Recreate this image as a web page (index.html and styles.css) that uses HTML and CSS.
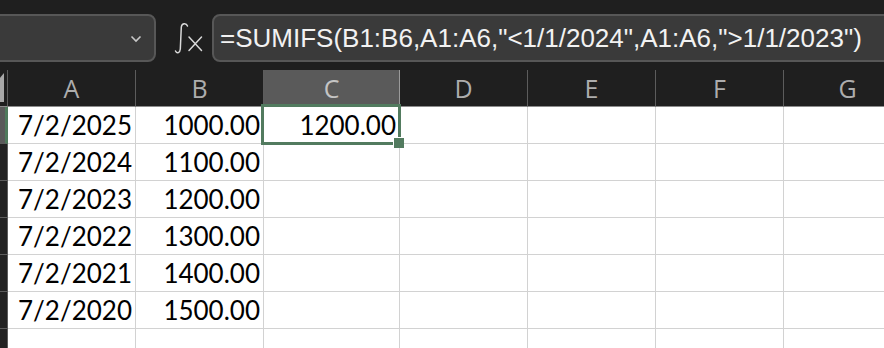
FILE: index.html
```html
<!DOCTYPE html>
<html lang="en">
<head>
    <meta charset="utf-8">
    <title>SUMIFS</title>
    <link rel="stylesheet" href="styles.css">
</head>
<body>
    <div class="toolbar">
        <div class="name-box">
            <svg class="chevron" width="12" height="8" viewBox="0 0 12 8"><polyline points="1.5,1.5 6,6 10.5,1.5" fill="none" stroke="#c8c8c8" stroke-width="1.6"/></svg>
        </div>
        <svg class="fx" width="32" height="36" viewBox="0 0 32 36">
            <path d="M15.5,6 C14.5,3 10,2.5 9.3,7 L8.3,29 C8,33 5,34 3.5,31" fill="none" stroke="#d9d9d9" stroke-width="1.5" stroke-linecap="round"/>
            <path d="M17,17 L29.5,30.5 M29.5,17 L17,30.5" fill="none" stroke="#d9d9d9" stroke-width="1.5" stroke-linecap="round"/>
        </svg>
        <div class="formula-box">=SUMIFS(B1:B6,A1:A6,"&lt;1/1/2024",A1:A6,"&gt;1/1/2023")</div>
    </div>

    <div class="sheet">
        <div class="corner"><span class="select-all"></span></div>
        <div class="col-head">A</div>
        <div class="col-head">B</div>
        <div class="col-head active">C</div>
        <div class="col-head">D</div>
        <div class="col-head">E</div>
        <div class="col-head">F</div>
        <div class="col-head">G</div>

        <div class="row-head active"></div>
        <div class="cell">7/2/2025</div>
        <div class="cell">1000.00</div>
        <div class="cell selected">1200.00<span class="selection"></span><span class="handle"></span></div>
        <div class="cell"></div><div class="cell"></div><div class="cell"></div><div class="cell"></div>

        <div class="row-head"></div>
        <div class="cell">7/2/2024</div>
        <div class="cell">1100.00</div>
        <div class="cell"></div><div class="cell"></div><div class="cell"></div><div class="cell"></div><div class="cell"></div>

        <div class="row-head"></div>
        <div class="cell">7/2/2023</div>
        <div class="cell">1200.00</div>
        <div class="cell"></div><div class="cell"></div><div class="cell"></div><div class="cell"></div><div class="cell"></div>

        <div class="row-head"></div>
        <div class="cell">7/2/2022</div>
        <div class="cell">1300.00</div>
        <div class="cell"></div><div class="cell"></div><div class="cell"></div><div class="cell"></div><div class="cell"></div>

        <div class="row-head"></div>
        <div class="cell">7/2/2021</div>
        <div class="cell">1400.00</div>
        <div class="cell"></div><div class="cell"></div><div class="cell"></div><div class="cell"></div><div class="cell"></div>

        <div class="row-head"></div>
        <div class="cell">7/2/2020</div>
        <div class="cell">1500.00</div>
        <div class="cell"></div><div class="cell"></div><div class="cell"></div><div class="cell"></div><div class="cell"></div>

        <div class="row-head"></div>
        <div class="cell"></div><div class="cell"></div><div class="cell"></div><div class="cell"></div><div class="cell"></div><div class="cell"></div><div class="cell"></div>
    </div>
</body>
</html>
```

FILE: styles.css
```css
html, body {
    margin: 0;
    padding: 0;
    width: 884px;
    height: 348px;
    overflow: hidden;
    background: #1f1f1f;
}

/* name box + formula bar */
.toolbar {
    display: flex;
    align-items: flex-start;
    height: 62px;
    padding-top: 14px;
    box-sizing: border-box;
}
.name-box {
    display: flex;
    align-items: center;
    justify-content: flex-end;
    width: 168px;
    height: 48px;
    margin-left: -12px;
    padding-right: 12px;
    box-sizing: border-box;
    background: #3a3a3a;
    border: 2px solid #575757;
    border-radius: 8px;
}
.chevron {
    margin-top: 2px;
}
.fx {
    margin: 6px 0 0 16px;
}
.formula-box {
    flex: 1;
    height: 48px;
    margin: 0 -30px 0 8px;
    padding-left: 6px;
    box-sizing: border-box;
    background: #3a3a3a;
    border: 2px solid #575757;
    border-radius: 8px;
    color: #f2f2f2;
    font-family: "Liberation Sans", Arial, sans-serif;
    font-size: 26px;
    line-height: 44px;
    white-space: nowrap;
    overflow: hidden;
}

/* grid */
.sheet {
    display: grid;
    grid-template-columns: 8px 128px 128px 136px 128px 128px 128px 128px;
    grid-template-rows: repeat(8, 37px);
    margin-top: 8px;
}
.corner {
    position: relative;
    border-right: 1px solid #5c5c5c;
    border-bottom: 1px solid #8c8c8c;
    overflow: hidden;
}
.select-all {
    position: absolute;
    left: -20px;
    top: 3px;
    width: 24px;
    height: 29px;
    background: #a8a8a8;
    clip-path: polygon(100% 0, 100% 100%, 0 100%);
}
.col-head {
    display: flex;
    align-items: center;
    justify-content: center;
    border-right: 1px solid #5c5c5c;
    border-bottom: 1px solid #8c8c8c;
    color: #adadad;
    font-family: "Open Sans", "Noto Sans", sans-serif;
    font-size: 25px;
}
.col-head.active {
    background: #5a5a5a;
    color: #c4c4c4;
    border-right-color: #9a9a9a;
}
.row-head {
    background: #222;
    border-right: 1px solid #5c5c5c;
    border-bottom: 1px solid #5c5c5c;
}
.row-head.active {
    background: #5a5a5a;
    border-right: 3px solid #4f7a5c;
}
.cell {
    position: relative;
    background: #fff;
    border-right: 1px solid #d2d2d2;
    border-bottom: 1px solid #d2d2d2;
    padding-right: 3px;
    color: #000;
    font-family: Lato, "Liberation Sans", sans-serif;
    font-size: 26px;
    line-height: 36px;
    text-align: right;
    white-space: nowrap;
}
.cell.selected {
    z-index: 1;
}

/* active cell outline */
.selection {
    position: absolute;
    left: -3px;
    top: -3px;
    right: -2px;
    bottom: -2px;
    box-shadow: inset 0 0 0 3px #527b5f;
}
.handle {
    position: absolute;
    right: -5px;
    bottom: -5px;
    width: 10px;
    height: 10px;
    background: #527b5f;
    box-shadow: -1px -1px 0 #fff;
}
```
